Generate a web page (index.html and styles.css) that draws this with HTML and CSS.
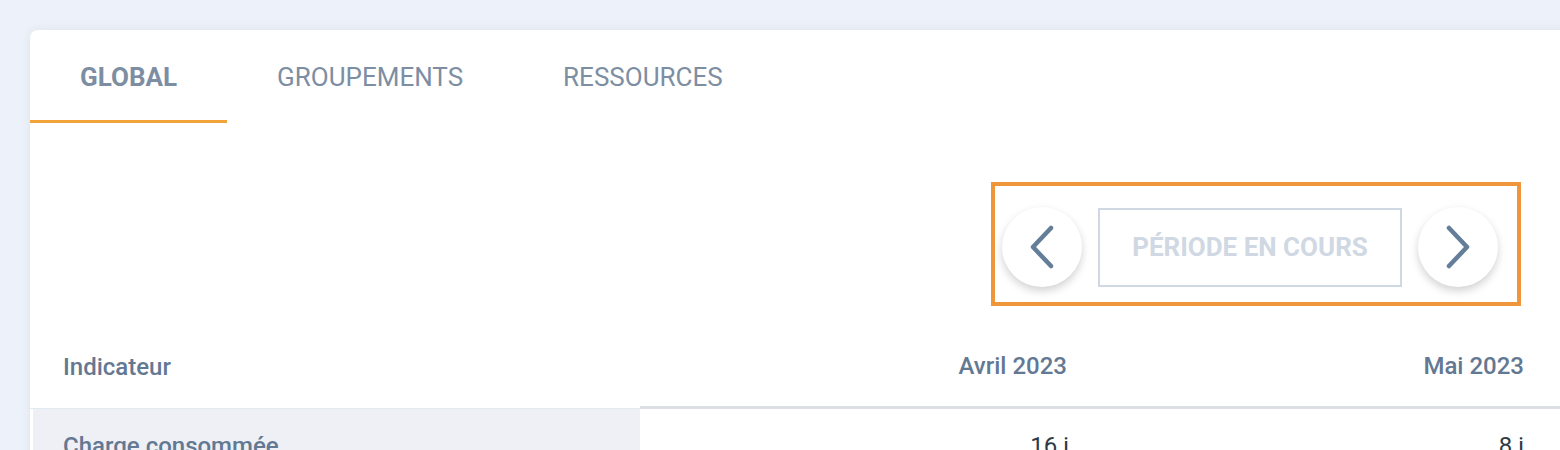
FILE: index.html
```html
<!DOCTYPE html>
<html lang="fr">
<head>
  <meta charset="UTF-8">
  <meta name="viewport" content="width=device-width, initial-scale=1.0">
  <title>Indicateurs</title>
  <link rel="stylesheet" href="styles.css">
</head>
<body>
  <div class="card">
    <div class="tabs">
      <div class="tab active">GLOBAL</div>
      <div class="tab">GROUPEMENTS</div>
      <div class="tab">RESSOURCES</div>
    </div>
    <div class="toolbar">
      <div class="period-nav">
        <button class="nav-button" aria-label="Précédent">
          <svg width="24" height="44" viewBox="0 0 24 44"><path d="M21 3 L3 22 L21 41" fill="none" stroke="#647d99" stroke-width="4.5" stroke-linecap="round" stroke-linejoin="round"/></svg>
        </button>
        <div class="period-label">PÉRIODE EN COURS</div>
        <button class="nav-button" aria-label="Suivant">
          <svg width="24" height="44" viewBox="0 0 24 44"><path d="M3 3 L21 22 L3 41" fill="none" stroke="#647d99" stroke-width="4.5" stroke-linecap="round" stroke-linejoin="round"/></svg>
        </button>
      </div>
    </div>
    <table class="indicators">
      <thead>
        <tr>
          <th class="col-label">Indicateur</th>
          <th>Avril 2023</th>
          <th class="col-last">Mai 2023</th>
        </tr>
      </thead>
      <tbody>
        <tr>
          <td class="col-label">Charge consommée</td>
          <td>16 j</td>
          <td class="col-last">8 j</td>
        </tr>
      </tbody>
    </table>
  </div>
</body>
</html>
```

FILE: styles.css
```css
body {
  margin: 0;
  padding: 30px 0 0 30px;
  background-color: #edf1f9;
  font-family: Roboto, "Liberation Sans", sans-serif;
  overflow: hidden;
}
.card {
  width: 1560px;
  background-color: #ffffff;
  border-radius: 8px 0 0 0;
  box-shadow: 0 0 10px rgba(60,70,90,0.08);
  min-height: 500px;
}
.tabs {
  display: flex;
}
.tab {
  padding: 32px 50px 0 50px;
  height: 58px;
  font-size: 26px;
  color: #7d8ea3;
  border-bottom: 3px solid transparent;
}
.tab.active {
  font-weight: bold;
  border-bottom-color: #f2a33a;
}
.toolbar {
  display: flex;
  padding: 59px 0 0 961px;
}
.period-nav {
  display: flex;
  align-items: center;
  gap: 16px;
  border: 4px solid #f0963a;
  padding: 21px 19px 15px 7px;
}
.nav-button {
  width: 80px;
  height: 80px;
  border-radius: 50%;
  border: none;
  background-color: #ffffff;
  box-shadow: 0 4px 8px rgba(0,0,0,0.18);
  display: flex;
  align-items: center;
  justify-content: center;
  padding: 0;
}
.period-label {
  width: 300px;
  height: 75px;
  border: 2px solid #cfd8e3;
  display: flex;
  align-items: center;
  justify-content: center;
  font-size: 26px;
  font-weight: bold;
  color: #cfd8e3;
}
.indicators {
  border-collapse: separate;
  border-spacing: 0;
  margin-top: 23px;
}
.indicators th {
  width: 427px;
  height: 73px;
  padding: 0 30px 4px 0;
  text-align: right;
  font-size: 24px;
  font-weight: 500;
  color: #637892;
  border-bottom: 3px solid #dcdfe4;
}
.indicators th.col-label {
  width: 577px;
  padding: 0 0 4px 33px;
  text-align: left;
  border-bottom: 1px solid #e3e9f1;
}
.indicators .col-last {
  padding-right: 40px;
}
.indicators td {
  padding: 23px 28px 23px 0;
  text-align: right;
  font-size: 24px;
  color: #2f3a45;
}
.indicators td.col-label {
  padding-left: 30px;
  text-align: left;
  background-color: #eef0f5;
  border-left: 3px solid #ffffff;
  color: #637892;
  font-weight: 500;
}
```
